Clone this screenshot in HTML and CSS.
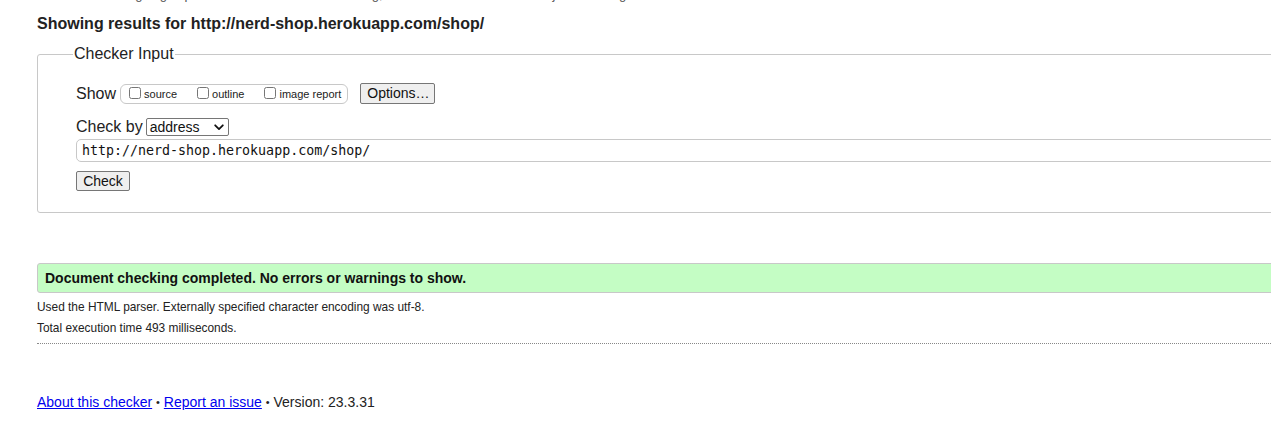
FILE: index.html
```html
<!DOCTYPE html>
<html lang="en">
<head>
<meta charset="utf-8">
<title>Nu Html Checker</title>
<link rel="stylesheet" href="styles.css">
</head>
<body>
<div class="page">
  <p class="intro">This tool is an ongoing experiment in better HTML checking, and its behavior remains subject to change</p>
  <h2 class="heading">Showing results for http://nerd-shop.herokuapp.com/shop/</h2>
  <form class="form">
    <fieldset class="checker">
      <legend class="checker-legend">Checker Input</legend>
      <div class="row show-row">
        <span class="row-label">Show</span>
        <fieldset class="show-group">
          <label class="opt"><input type="checkbox" class="cb">source</label>
          <label class="opt"><input type="checkbox" class="cb">outline</label>
          <label class="opt"><input type="checkbox" class="cb">image report</label>
        </fieldset>
        <button type="button" class="btn options-btn">Options…</button>
      </div>
      <div class="row checkby-row">
        <span class="row-label">Check by</span>
        <span class="select">address<svg class="chev" width="10" height="7" viewBox="0 0 10 7"><path d="M1.2 1.3 L5 5.1 L8.8 1.3" fill="none" stroke="#111" stroke-width="1.8" stroke-linecap="round" stroke-linejoin="round"/></svg></span>
      </div>
      <div class="url-input">http://nerd-shop.herokuapp.com/shop/</div>
      <button type="button" class="btn check-btn">Check</button>
    </fieldset>
  </form>
  <div class="success">Document checking completed. No errors or warnings to show.</div>
  <p class="details">Used the HTML parser. Externally specified character encoding was utf-8.</p>
  <p class="details">Total execution time 493 milliseconds.</p>
  <hr class="dots">
  <p class="footer"><a href="#" class="link">About this checker</a> <span class="sep">•</span> <a href="#" class="link">Report an issue</a> <span class="sep">•</span> Version: 23.3.31</p>
</div>
</body>
</html>
```
FILE: styles.css
```css
html, body {
  margin: 0;
  padding: 0;
  overflow: hidden;
  background: #fff;
}
body {
  font-family: "Liberation Sans", Arial, sans-serif;
  color: #222;
}
.page {
  width: 1400px;
  padding-left: 37px;
}
.intro {
  margin: -13px 0 0;
  font-size: 13px;
  line-height: 16px;
  color: #555;
}
.heading {
  margin: 12px 0 0;
  font-size: 16px;
  line-height: 18px;
  font-weight: bold;
  color: #222;
}
.form {
  margin: 12px 0 0;
}
.checker {
  margin: 0;
  border: 1px solid #c8c8c8;
  border-radius: 3px;
  padding: 20px 0 21px 38px;
  min-width: 0;
}
.checker-legend {
  font-size: 16px;
  line-height: 18px;
  padding: 0 1px;
  margin-left: -3px;
  color: #222;
}
.row {
  display: flex;
  align-items: center;
}
.row-label {
  font-size: 16px;
  line-height: 18px;
  color: #222;
}
.show-row {
  height: 21px;
}
.show-group {
  display: flex;
  align-items: center;
  margin: 0 0 0 4px;
  padding: 0 6px 0 6px;
  height: 18px;
  border: 1px solid #c8c8c8;
  border-radius: 6px;
  gap: 18px;
}
.opt {
  display: flex;
  align-items: center;
  font-size: 11px;
  color: #222;
  line-height: 13px;
  padding-top: 2px;
}
.cb {
  margin: 0 3px 0 2px;
  width: 12px;
  height: 12px;
  position: relative;
  top: -2px;
}
.btn {
  font-family: "Liberation Sans", Arial, sans-serif;
  font-size: 14px;
  color: #111;
  background: #efefef;
  border: 1px solid #767676;
  border-radius: 2px;
  padding: 0 6px;
  height: 21px;
  line-height: 19px;
}
.options-btn {
  margin-left: 12px;
  width: 75px;
}
.checkby-row {
  margin-top: 14px;
  height: 18px;
}
.select {
  display: inline-flex;
  align-items: center;
  justify-content: space-between;
  margin-left: 3px;
  width: 83px;
  height: 18px;
  box-sizing: border-box;
  border: 1px solid #767676;
  border-radius: 2px;
  padding: 0 4px 0 3px;
  font-size: 14px;
  color: #111;
}
.url-input {
  margin-top: 3px;
  height: 23px;
  box-sizing: border-box;
  border: 1px solid #c8c8c8;
  border-radius: 5px;
  padding: 0 5px;
  font-family: "DejaVu Sans Mono", "Liberation Mono", monospace;
  font-size: 13.3px;
  line-height: 21px;
  color: #111;
}
.check-btn {
  display: block;
  margin-top: 9px;
  width: 54px;
  height: 20px;
  line-height: 18px;
}
.success {
  margin-top: 50px;
  height: 30px;
  box-sizing: border-box;
  background: #c4fdc4;
  border: 1px solid #c8c8c8;
  border-radius: 3px;
  padding: 0 7px;
  font-size: 14px;
  font-weight: bold;
  line-height: 28px;
  color: #111;
}
.details {
  margin: 7px 0 0;
  font-size: 11.9px;
  line-height: 14px;
  color: #222;
}
.dots {
  margin: 8px 0 0;
  border: 0;
  border-top: 1px dotted #888;
  height: 0;
}
.footer {
  margin: 50px 0 0;
  font-size: 14px;
  line-height: 17px;
  color: #222;
}
.sep {
  font-size: 11px;
  vertical-align: 1px;
}
.link {
  color: #0000ee;
  text-decoration: underline;
}
```
